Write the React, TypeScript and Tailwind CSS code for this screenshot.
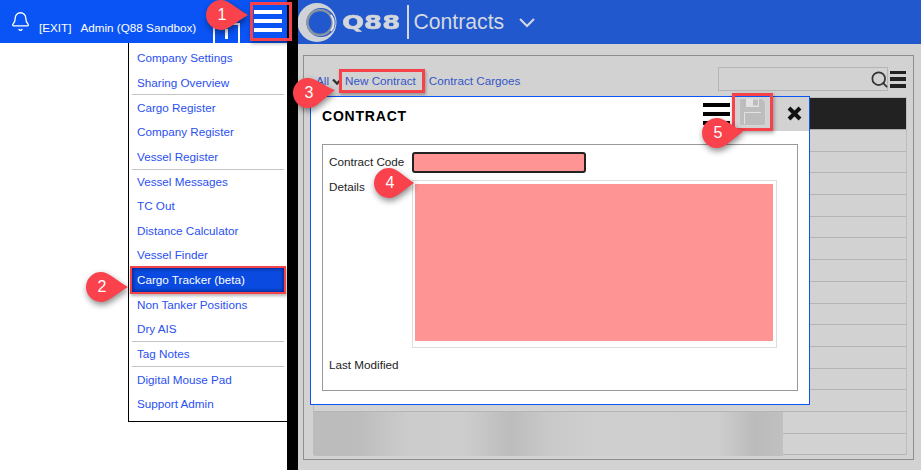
import React from 'react'
import { Bell, Search } from 'lucide-react'

const menuGroups = [
  ['Company Settings', 'Sharing Overview'],
  ['Cargo Register', 'Company Register', 'Vessel Register'],
  ['Vessel Messages', 'TC Out', 'Distance Calculator', 'Vessel Finder', 'Cargo Tracker (beta)', 'Non Tanker Positions', 'Dry AIS'],
  ['Tag Notes'],
  ['Digital Mouse Pad', 'Support Admin'],
]

// numbered red callout, pointer drawn at the given angle
function Callout({ n, className, angle = 0, reach = 27 }: { n: number; className: string; angle?: number; reach?: number }) {
  return (
    <div className={`absolute z-30 w-[80px] h-[80px] ${className}`}>
      <svg width="80" height="80" viewBox="-40 -40 80 80" className="absolute inset-0 drop-shadow-[1px_3px_3px_rgba(0,0,0,0.45)]">
        <g transform={`rotate(${angle})`}>
          <path d={`M0 -15 C8 -15 13 -8 ${reach} 0 C13 8 8 15 0 15 A15 15 0 0 1 0 -15 Z`} fill="#f9424b" />
        </g>
      </svg>
      <span className="absolute inset-0 pl-[2px] flex items-center justify-center text-white text-[16px]">{n}</span>
    </div>
  )
}

function Bars({ className, bar }: { className: string; bar: string }) {
  return (
    <div className={`flex flex-col justify-between ${className}`}>
      <div className={bar} />
      <div className={bar} />
      <div className={bar} />
    </div>
  )
}

function Q88Logo() {
  return (
    <div className="flex items-center shrink-0">
      <svg width="40" height="42" viewBox="0 0 40 42" className="shrink-0">
        <path
          fillRule="evenodd"
          d="M19 2 A19.5 19.5 0 1 1 19 41 A19.5 19.5 0 1 1 19 2 Z M23 7 A14.5 14.5 0 1 0 23 36 A14.5 14.5 0 1 0 23 7 Z"
          fill="#cfd2d6"
        />
        <circle cx="22" cy="21.5" r="12.5" fill="none" stroke="#8a93a0" strokeWidth="2.5" />
        <path d="M33 14 A13 13 0 0 1 33 30" fill="none" stroke="#e4e6e8" strokeWidth="2" />
      </svg>
      <span className="ml-[4px] w-[61px] text-[20px] leading-none font-bold text-[#d3d6da] font-['DejaVu_Sans'] scale-x-[1.3] origin-left [-webkit-text-stroke:0.6px_#d3d6da]">Q88</span>
    </div>
  )
}

function Sidebar() {
  return (
    <aside className="relative w-[287px] shrink-0 bg-white">
      <header className="h-[43px] bg-[#0a54f5] flex items-center text-white text-[11.7px] whitespace-nowrap">
        <Bell className="ml-[10px] mt-[-1px] w-[21px] h-[23px] shrink-0" strokeWidth={1.5} />
        <span className="ml-[8px] mt-[13px] leading-none">[EXIT]</span>
        <span className="ml-[9px] mt-[13px] leading-none">Admin (Q88 Sandbox)</span>
        <div className="absolute left-[213px] top-[23px] w-[27px] h-[20px] border-2 border-b-0 border-white flex justify-center">
          <div className="w-[3px] h-[10px] mt-[4px] bg-white" />
        </div>
      </header>
      <div className="absolute z-10 left-[250px] top-[2px] w-[42px] h-[39px] border-[3px] border-[#f5424b] pl-[1px] pt-[5px] shadow-[1px_2px_4px_rgba(0,0,0,0.4)]">
        <Bars className="w-[28px] h-[22px]" bar="h-[4px] bg-white" />
      </div>

      <nav className="ml-[128px] w-[159px] h-[379px] bg-white border-l border-b border-black pt-[2.7px]">
        {menuGroups.map((group, i) => (
          <div key={i} className="mx-[3px] border-b border-[#c4c4c4] last:border-b-0">
            {group.map((item) =>
              item.startsWith('Cargo Tracker') ? (
                <div key={item} className="relative -mt-[1px] -mb-[2px] -ml-[2px] h-[28px] w-[156px] flex items-center pl-[5px] bg-[#0a4ae0] border-2 border-[#f5424b] text-white text-[11.7px] shadow-[inset_0_0_4px_rgba(0,0,30,0.7),1px_2px_3px_rgba(0,0,0,0.3)]">
                  {item}
                </div>
              ) : (
                <div key={item} className="h-[24.4px] flex items-center pl-[5px] text-[11.7px] text-[#2a50f0]">
                  {item}
                </div>
              ),
            )}
          </div>
        ))}
      </nav>

      <Callout n={1} className="left-[181px] top-[-25px]" />
      <Callout n={2} className="left-[61px] top-[247px]" />
    </aside>
  )
}

function ContractModal() {
  return (
    <div className="absolute z-20 left-[12px] top-[96px] w-[500px] h-[309px] bg-white border border-[#0a54f5]">
      <div className="flex h-[34px] items-start">
        <h2 className="ml-[11px] mt-[12px] text-[14px] leading-none font-bold tracking-[0.8px] text-black">CONTRACT</h2>
        <Bars className="ml-auto mt-[6px] w-[27px] h-[22px]" bar="h-[4px] bg-black" />
        <div className="ml-[3px] w-[76px] h-[34px] bg-[#d2d2d2] flex items-start relative">
          <div className="absolute left-[-1px] top-[-4px] w-[41px] h-[38px] border-[3px] border-[#f5424b] shadow-[1px_2px_4px_rgba(0,0,0,0.35)] flex items-center justify-center">
            <svg width="27" height="28" viewBox="0 0 27 28">
              <path d="M2 .5 H23 L26.5 4 V25.5 Q26.5 27.5 24.5 27.5 H2 Q.5 27.5 .5 26 V2 Q.5 .5 2 .5 Z" fill="#bdbdbd" stroke="#d6d6d6" />
              <path d="M7 1 H20 V9 H7 Z" fill="#e2e2e2" />
              <path d="M14 1.5 H19 V7.5 H14 Z" fill="#bdbdbd" />
              <path d="M5.5 26 V14.5 H22" fill="none" stroke="#e2e2e2" strokeWidth="1" />
            </svg>
          </div>
          <svg width="15" height="15" viewBox="0 0 15 15" className="absolute left-[54px] top-[9px]">
            <path d="M2 2 L13 13 M13 2 L2 13" stroke="#111" strokeWidth="4" />
          </svg>
        </div>
      </div>

      <div className="ml-[11px] mt-[13px] w-[476px] h-[247px] border border-[#999] text-[11.7px] text-[#222] relative">
        <div className="flex pl-[6px] pt-[7px] items-center">
          <label className="w-[83px] mt-[-2px]">Contract Code</label>
          <div className="w-[174px] h-[21px] bg-[#ff9494] border-2 border-[#222] rounded-[3px]" />
        </div>
        <div className="flex pl-[6px] mt-[7px]">
          <label className="w-[83px] mt-[-2px] leading-[17px]">Details</label>
          <div className="w-[365px] h-[168px] border border-[#ddd] pl-[2px] pt-[3px]">
            <div className="w-[358px] h-[157px] bg-[#ff9494]" />
          </div>
        </div>
        <div className="pl-[6px] mt-[8px] leading-[17px]">Last Modified</div>
      </div>
      <Callout n={4} className="left-[38px] top-[46px]" reach={25} />
      <Callout n={5} className="left-[366px] top-[-4px]" angle={-3} reach={26} />
    </div>
  )
}

function ContractsPage() {
  return (
    <main className="relative flex-1 bg-[#d2d2d2] flex flex-col">
      <header className="h-[44px] bg-[#2158cd] flex items-center shrink-0">
        <Q88Logo />
        <div className="ml-[4px] w-[1.5px] h-[34px] bg-[#d4d8e0]" />
        <span className="ml-[5px] text-[21.2px] text-[#d4d8e0] leading-none">Contracts</span>
        <svg width="16" height="11" viewBox="0 0 16 11" className="ml-[15px]">
          <path d="M1 2 L8 9 L15 2" fill="none" stroke="#d4d8e0" strokeWidth="2" />
        </svg>
      </header>

      <section className="ml-[5px] mt-[11px] w-[611px] h-[405px] border border-[#8e8e8e] pl-[9px] pr-[6px]">
        <div className="flex items-start h-[40px]">
          <div className="flex items-center mt-[17px] text-[11.7px] leading-[16px] text-[#3456c8]">
            <span className="ml-[3px]">All</span>
            <svg width="10" height="8" viewBox="0 0 10 8" className="ml-[3px] mt-[2px]">
              <path d="M1 1.5 L5 5.5 L9 1.5" fill="none" stroke="#333" strokeWidth="2.4" />
            </svg>
            <span className="relative ml-[3px]">
              New Contract
              <span className="absolute left-[-6px] top-[-4px] w-[86px] h-[24px] border-[3px] border-[#f5424b] shadow-[1px_2px_3px_rgba(0,0,0,0.3)]" />
            </span>
            <span className="ml-[13px]">Contract Cargoes</span>
          </div>
          <div className="ml-auto mt-[11px] mr-[1px] flex items-center">
            <div className="w-[170px] h-[24px] border border-[#b5b5b5] flex justify-end items-center">
              <Search className="w-[19px] h-[19px] text-[#333] mr-[-2px]" strokeWidth={2.2} />
            </div>
            <Bars className="ml-[2px] w-[16px] h-[17px]" bar="h-[3.5px] bg-[#222]" />
          </div>
        </div>

        <div className="border border-[#bdbdbd] h-[358px] mt-[1px] relative">
          <div className="h-[32px] bg-[#222] border-b border-[#aaa]" />
          {Array.from({ length: 15 }).map((_, i) => (
            <div key={i} className="h-[21.7px] border-b border-[#b5b5b5] last:border-b-0" />
          ))}
          <div className="absolute left-0 top-[314px] w-[469px] h-[44px] bg-[linear-gradient(90deg,#bcbcbc_0%,#bdbdbd_10%,#cccccc_20%,#cdcdcd_32%,#bbbcbb_42%,#c9c9c9_50%,#cfcfcf_60%,#cecece_86%,#bbbbbb_94%,#c0c0c0_100%)]" />
        </div>
      </section>

      <ContractModal />
      <Callout n={3} className="left-[-30px] top-[53px]" angle={-6} />
    </main>
  )
}

export default function App() {
  return (
    <div className="flex w-[921px] h-[470px] overflow-hidden bg-white font-['Liberation_Sans',Arial,sans-serif]">
      <Sidebar />
      <div className="w-[11px] shrink-0 bg-black" />
      <ContractsPage />
    </div>
  )
}
